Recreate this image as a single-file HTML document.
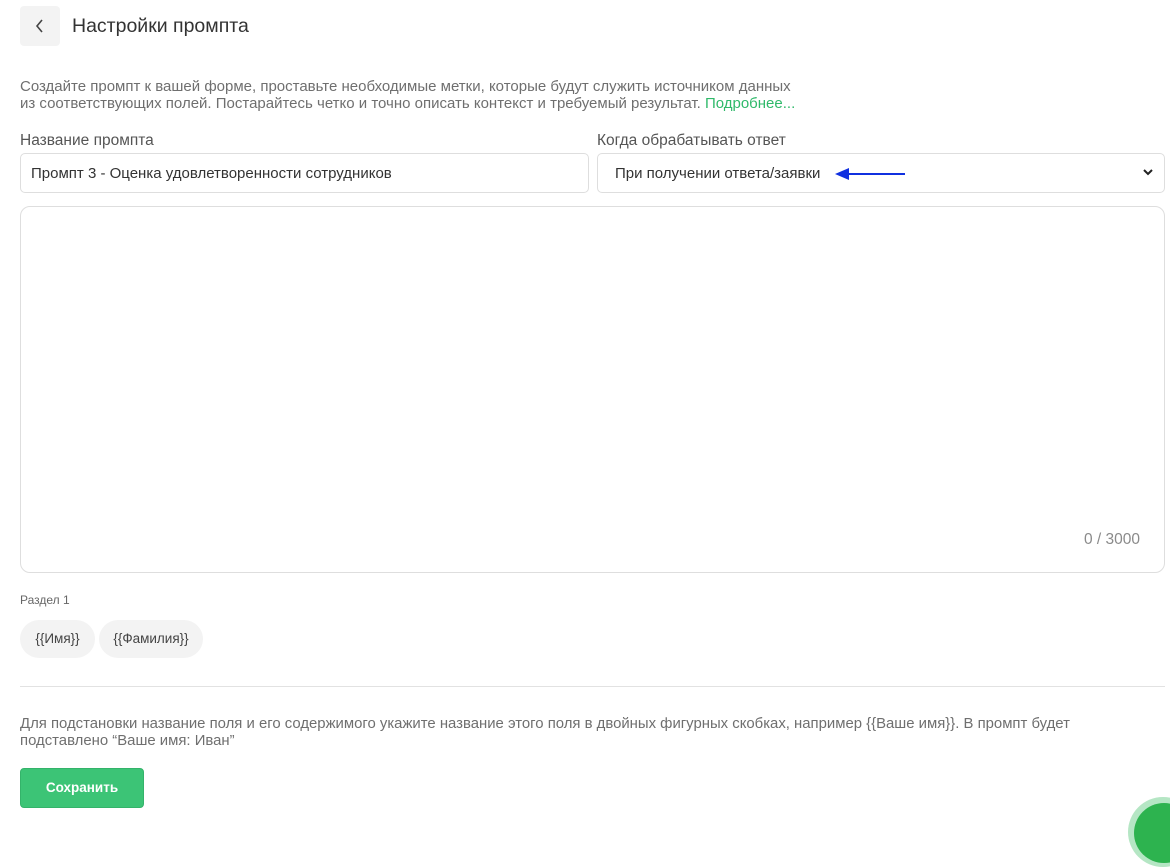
<!DOCTYPE html>
<html><head><meta charset="utf-8"><style>
*{box-sizing:border-box;margin:0;padding:0}
body{width:1170px;height:816px;overflow:hidden;background:#fff;font-family:"Liberation Sans","DejaVu Sans",sans-serif;color:#333;position:relative}
.abs{position:absolute;white-space:nowrap}
.back{left:20px;top:6px;width:40px;height:40px;background:#f3f3f3;border-radius:4px}
.desc{left:20px;top:78px;font-size:15px;line-height:17px;color:#6f6f6f}
.desc a{color:#2fb96a;text-decoration:none}
.lbl{font-size:15.5px;color:#555}
.inp{border:1px solid #dedede;border-radius:5px;height:40px;font-size:15px;color:#333;padding:11px 10px}
.ta{left:20px;top:206px;width:1145px;height:367px;border:1px solid #dedede;border-radius:10px}
.cnt{right:30px;top:531px;font-size:15.5px;color:#8a8a8a}
.chip{top:620px;height:38px;background:#f3f3f3;border-radius:19px;font-size:13.5px;color:#444;padding:11px 0;text-align:center}
.hr{left:20px;top:686px;width:1145px;height:1px;background:#e2e2e2}
.btn{left:20px;top:768px;width:124px;height:40px;background:#3cc476;border:1px solid #34b36a;border-radius:4px;color:#fff;font-weight:bold;font-size:13.5px;text-align:center;line-height:38px}
</style></head><body>
<div class="abs back"><svg width="40" height="40"><path d="M22 14 L17 20 L22 26" stroke="#444" stroke-width="1.6" fill="none"/></svg></div>
<div class="abs" style="left:72px;top:15px;font-size:19.5px;color:#333">Настройки промпта</div>
<div class="abs desc">Создайте промпт к вашей форме, проставьте необходимые метки, которые будут служить источником данных<br>из соответствующих полей. Постарайтесь четко и точно описать контекст и требуемый результат. <a>Подробнее...</a></div>
<div class="abs lbl" style="left:20px;top:132px">Название промпта</div>
<div class="abs lbl" style="left:597px;top:132px">Когда обрабатывать ответ</div>
<div class="abs inp" style="left:20px;top:153px;width:569px">Промпт 3 - Оценка удовлетворенности сотрудников</div>
<div class="abs inp" style="left:597px;top:153px;width:568px;padding-left:17px">При получении ответа/заявки</div>
<svg class="abs" style="left:835px;top:165px" width="72" height="18"><path d="M12 9 H70" stroke="#1030e0" stroke-width="2"/><path d="M0 9 L14 3 L14 15 Z" fill="#1030e0"/></svg>
<svg class="abs" style="left:1142px;top:167px" width="12" height="10"><path d="M2 3 L6 7 L10 3" stroke="#222" stroke-width="2" fill="none"/></svg>
<div class="abs ta"></div>
<div class="abs cnt">0 / 3000</div>
<div class="abs" style="left:20px;top:593px;font-size:12px;color:#666">Раздел 1</div>
<div class="abs chip" style="left:20px;width:75px">{{Имя}}</div>
<div class="abs chip" style="left:99px;width:104px">{{Фамилия}}</div>
<div class="abs hr"></div>
<div class="abs" style="left:20px;top:716px;font-size:14.9px;line-height:17px;color:#6f6f6f">Для подстановки название поля и его содержимого укажите название этого поля в двойных фигурных скобках, например {{Ваше имя}}. В промпт будет<br>подставлено “Ваше имя: Иван”</div>
<div class="abs btn">Сохранить</div>
<div class="abs" style="left:1128px;top:797px;width:70px;height:70px;border-radius:50%;background:#b5e6c4"></div>
<div class="abs" style="left:1134px;top:803px;width:60px;height:60px;border-radius:50%;background:#2db34f"></div>
</body></html>
